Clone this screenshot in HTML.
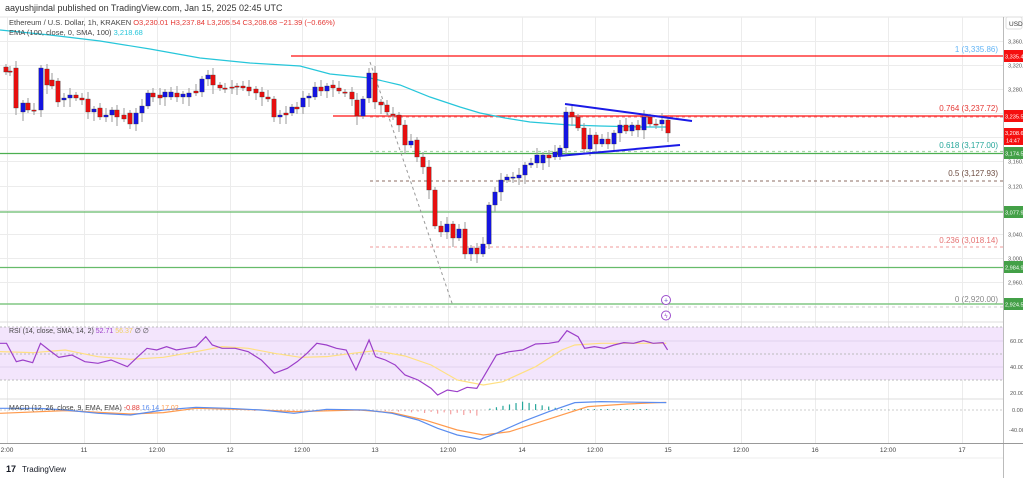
<!DOCTYPE html>
<html><head><meta charset="utf-8"><style>
html,body{margin:0;padding:0;background:#fff;width:1023px;height:478px;overflow:hidden;font-family:"Liberation Sans",sans-serif}
svg text{font-family:"Liberation Sans",sans-serif}
</style></head><body>
<svg id="s" width="1023" height="478" viewBox="0 0 1023 478" xmlns="http://www.w3.org/2000/svg">
<text x="5" y="11" font-size="9" fill="#333">aayushjindal published on TradingView.com, Jan 15, 2025 02:45 UTC</text>
<line x1="0" y1="17" x2="1023" y2="17" stroke="#e6e6e6"/>
<g id="grid" stroke="#ececec" stroke-width="1"></g>
<line x1="1003.5" y1="17" x2="1003.5" y2="478" stroke="#bbb"/>
<rect x="1006" y="17" width="16" height="12" fill="#fff" stroke="#ddd" rx="2"/>
<text x="1009" y="26" font-size="6.5" fill="#333">USD</text>
<g font-size="5.6" fill="#555" id="pax"></g>
<line x1="291" y1="56" x2="1003" y2="56" stroke="#ff1010" stroke-width="1.3"/>
<line x1="333" y1="116" x2="1003" y2="116" stroke="#ff1010" stroke-width="1.3"/>
<line x1="370" y1="117" x2="1003" y2="117" stroke="#f08080" stroke-dasharray="3,3"/>
<line x1="0" y1="153.5" x2="1003" y2="153.5" stroke="#4caf50" stroke-width="1.2"/>
<line x1="370" y1="151.5" x2="1003" y2="151.5" stroke="#a5d6a7" stroke-dasharray="3,3" stroke-width="1.3"/>
<line x1="370" y1="181" x2="1003" y2="181" stroke="#8d6e63" stroke-dasharray="3,3"/>
<line x1="0" y1="212" x2="1003" y2="212" stroke="#66bb6a" stroke-width="1.2"/>
<line x1="370" y1="247" x2="1003" y2="247" stroke="#ef9a9a" stroke-dasharray="3,3"/>
<line x1="0" y1="267.5" x2="1003" y2="267.5" stroke="#66bb6a" stroke-width="1.2"/>
<line x1="0" y1="304" x2="1003" y2="304" stroke="#81c784" stroke-width="1.6"/>
<line x1="370" y1="307" x2="1003" y2="307" stroke="#ccc" stroke-dasharray="3,3"/>
<g font-size="8">
<text x="998" y="52" text-anchor="end" fill="#64b5f6">1 (3,335.86)</text>
<text x="998" y="111" text-anchor="end" fill="#e53935">0.764 (3,237.72)</text>
<text x="998" y="148" text-anchor="end" fill="#26a69a">0.618 (3,177.00)</text>
<text x="998" y="176" text-anchor="end" fill="#6d4c41">0.5 (3,127.93)</text>
<text x="998" y="243" text-anchor="end" fill="#e57373">0.236 (3,018.14)</text>
<text x="998" y="302" text-anchor="end" fill="#888">0 (2,920.00)</text>
</g>
<polyline points="370,62 453,306" stroke="#999" stroke-dasharray="3,3" fill="none"/>
<polyline fill="none" stroke="#26c6da" stroke-width="1.2" points="0,30 50,35 100,41 150,49 200,58 250,63 300,66 330,74 370,78 400,85 430,97 460,107 480,113 505,118 530,122 570,125 600,126 640,127 670,127"/>
<g id="candles"></g>
<line x1="565" y1="104" x2="692" y2="121" stroke="#1a1ae6" stroke-width="2"/>
<line x1="558" y1="156" x2="680" y2="145" stroke="#1a1ae6" stroke-width="2"/>
<g font-size="5.6" fill="#fff">
<rect x="1004" y="50" width="19" height="12" fill="#f50f0f"/><text x="1005" y="58.5">3,335.42</text>
<rect x="1004" y="110" width="19" height="12" fill="#f50f0f"/><text x="1005" y="118.5">3,235.53</text>
<rect x="1004" y="128" width="19" height="17" fill="#f50f0f"/><text x="1005" y="135">3,208.68</text><text x="1006" y="142.5">14:47</text>
<rect x="1004" y="147" width="19" height="12" fill="#43a047"/><text x="1005" y="155.5">3,174.59</text>
<rect x="1004" y="206" width="19" height="12" fill="#43a047"/><text x="1005" y="214.5">3,077.97</text>
<rect x="1004" y="261" width="19" height="12" fill="#43a047"/><text x="1005" y="269.5">2,984.90</text>
<rect x="1004" y="298" width="19" height="12" fill="#43a047"/><text x="1005" y="306.5">2,924.53</text>
</g>
<g font-size="7.5">
<text x="9" y="25" fill="#444">Ethereum / U.S. Dollar, 1h, KRAKEN <tspan fill="#e53935">O3,230.01  H3,237.84  L3,205.54  C3,208.68  −21.39 (−0.66%)</tspan></text>
<text x="9" y="35" fill="#444">EMA (100, close, 0, SMA, 100) <tspan fill="#26c6da">3,218.68</tspan></text>
</g>
<circle cx="666" cy="300" r="4.5" fill="#fff" stroke="#9c4dcc"/><text x="666" y="302.5" font-size="7" fill="#6a5acd" text-anchor="middle">+</text>
<circle cx="666" cy="315.5" r="4.5" fill="#fff" stroke="#9c4dcc"/><text x="666" y="318" font-size="6" fill="#9c4dcc" text-anchor="middle">ϟ</text>
<line x1="0" y1="322" x2="1003" y2="322" stroke="#ddd"/>
<rect x="0" y="327" width="1003" height="53" fill="#f3e5fc"/>
<line x1="0" y1="327" x2="1003" y2="327" stroke="#bbb" stroke-dasharray="2,2"/>
<line x1="0" y1="354" x2="1003" y2="354" stroke="#bbb" stroke-dasharray="2,2"/>
<line x1="0" y1="380" x2="1003" y2="380" stroke="#bbb" stroke-dasharray="2,2"/>
<line x1="0" y1="341" x2="1003" y2="341" stroke="#e2d4ee"/>
<line x1="0" y1="367" x2="1003" y2="367" stroke="#e2d4ee"/>
<g font-size="5.6" fill="#555"><text x="1010" y="343">60.00</text><text x="1010" y="369">40.00</text><text x="1010" y="395">20.00</text><text x="1012" y="412">0.00</text><text x="1009" y="432">-40.00</text></g>
<line x1="0" y1="399" x2="1003" y2="399" stroke="#ddd"/>
<line x1="0" y1="410" x2="1003" y2="410" stroke="#ccc" stroke-dasharray="2,2"/>
<g transform="translate(0,300) scale(0.6532,0.3333)" fill="none" stroke-width="1.2">
<polyline vector-effect="non-scaling-stroke" stroke="#ffe082" points="0,155 50,158 100,150 150,170 200,178 250,172 300,155 340,140 380,145 420,160 460,172 500,170 540,160 575,152 620,168 660,195 700,240 740,255 770,245 820,200 860,150 880,135 920,130 1020,130"/>
<polyline vector-effect="non-scaling-stroke" stroke="#9c3fc9" points="0,130 10,130 25,185 35,180 50,188 62,130 75,150 90,172 110,165 130,185 150,190 170,180 195,200 210,172 225,145 240,150 255,140 270,150 285,145 300,140 315,110 325,135 340,145 360,145 380,155 400,180 420,220 440,205 455,185 470,160 485,130 500,135 515,145 530,150 545,210 565,120 575,170 590,180 605,195 620,225 640,240 660,265 670,285 685,270 700,275 715,262 730,265 745,215 760,165 780,155 800,150 820,132 840,130 855,125 868,92 885,110 895,145 910,140 925,145 940,135 955,128 970,130 985,122 1000,130 1015,128 1022,150"/>
<g id="hist"></g>
<polyline vector-effect="non-scaling-stroke" stroke="#ff9a4d" points="0,340 100,332 200,342 250,338 300,325 400,330 450,335 550,330 600,338 650,360 700,390 740,405 780,395 820,370 860,345 900,320 960,312 1020,307"/>
<polyline vector-effect="non-scaling-stroke" stroke="#5b8def" points="0,325 60,325 100,330 150,340 200,345 250,330 300,322 350,325 400,330 450,340 500,328 560,330 600,340 640,360 670,385 700,405 735,418 760,400 800,365 840,335 880,308 920,305 1020,308"/>
</g>
<g font-size="7">
<text x="9" y="333" fill="#444">RSI (14, close, SMA, 14, 2) <tspan fill="#9c3fc9">52.71</tspan> <tspan fill="#f0d060">56.37</tspan> ∅ ∅</text>
<text x="9" y="410" fill="#444">MACD (12, 26, close, 9, EMA, EMA) <tspan fill="#e53935">-0.88</tspan> <tspan fill="#5b8def">16.14</tspan> <tspan fill="#ff9a4d">17.02</tspan></text>
</g>
<line x1="0" y1="443.5" x2="1023" y2="443.5" stroke="#999"/>
<line x1="0" y1="458" x2="1003" y2="458" stroke="#eee"/>
<g font-size="6.5" fill="#444" text-anchor="middle" id="tax"></g>
<text x="6" y="472" font-size="9" font-weight="bold" fill="#131722">17</text>
<text x="22" y="472" font-size="8" fill="#131722">TradingView</text>
</svg>
<script>
var NS="http://www.w3.org/2000/svg";
function el(p,t,a){var e=document.createElementNS(NS,t);for(var k in a)e.setAttribute(k,a[k]);p.appendChild(e);return e;}
var g=document.getElementById('grid');
[41,65,89,113,137,161,186,210,234,258,282].forEach(function(y){el(g,'line',{x1:0,y1:y+.5,x2:1003,y2:y+.5});});
var xs=[7,84,157,230,302,375,448,522,595,668,741,815,888,962];
xs.forEach(function(x){el(g,'line',{x1:x+.5,y1:17,x2:x+.5,y2:443});});
var tl=["2:00","11","12:00","12","12:00","13","12:00","14","12:00","15","12:00","16","12:00","17"];
var ta=document.getElementById('tax');
xs.forEach(function(x,i){var t=el(ta,'text',{x:x,y:452});t.textContent=tl[i];});
var pa=document.getElementById('pax');
[[41,"3,360.00"],[65,"3,320.00"],[89,"3,280.00"],[161,"3,160.00"],[186,"3,120.00"],[234,"3,040.00"],[258,"3,000.00"],[282,"2,960.00"]].forEach(function(p){var t=el(pa,'text',{x:1008,y:p[0]+2.5});t.textContent=p[1];});
var C=[[6,67,72],[10,71,71],[16,68,108],[23,112,103],[28,103,110],[34,110,110],[41,110,68],[47,69,85],[52,80,86],[58,81,102],[64,100,98],[70,98,95],[76,95,98],[82,98,100],[88,99,112],[94,112,109],[100,108,117],[106,117,115],[112,115,110],[117,110,117],[124,115,119],[130,113,124],[136,124,113],[142,113,106],[148,106,93],[153,93,97],[160,95,98],[165,97,92],[171,97,92],[177,93,97],[183,97,94],[189,97,93],[196,91,93],[202,92,79],[208,79,75],[213,75,85],[220,85,88],[225,88,88],[232,87,87],[237,86,86],[243,86,88],[249,87,91],[256,89,93],[262,92,97],[268,97,99],[274,99,117],[280,117,115],[286,113,115],[292,113,107],[297,107,109],[303,107,98],[309,98,96],[315,97,87],[321,87,91],[327,91,86],[333,85,88],[339,88,91],[345,92,92],[352,92,99],[357,100,116],[363,116,99],[369,98,73],[375,73,102],[381,102,105],[387,105,112],[393,114,115],[399,115,125],[405,125,145],[411,145,141],[417,140,157],[423,157,167],[429,167,190],[435,190,226],[441,226,232],[447,232,224],[453,224,238],[459,238,229],[465,229,254],[471,254,248],[477,248,254],[483,254,244],[489,244,205],[495,205,192],[501,192,180],[507,180,177],[513,178,177],[519,178,175],[525,175,165],[531,165,163],[537,163,155],[543,163,155],[549,155,158],[555,157,152],[560,155,148],[566,148,112],[572,112,117],[578,117,128],[584,128,149],[590,149,135],[596,135,144],[602,144,139],[608,139,144],[614,144,133],[620,133,125],[626,125,131],[632,131,125],[638,125,130],[644,130,117],[650,117,124],[656,124,124],[662,124,120],[668,120,133]];
var cg=document.getElementById('candles');
C.forEach(function(c,i){var x=c[0],o=c[1],cl=c[2];var up=cl<o;var col=up?'#1414e0':'#e60f0f';
var t=Math.min(o,cl),b=Math.max(o,cl);var h=Math.max(b-t,1.2);
var wt=t-3-(i%3)*2,wb=b+3+(i%4)*2;
el(cg,'line',{x1:x,y1:wt,x2:x,y2:wb,stroke:'#9a9a9a','stroke-width':1});
el(cg,'rect',{x:x-2.2,y:t,width:4.4,height:h,fill:col,stroke:'#333','stroke-width':0.3});});
var hg=document.getElementById('hist');
for(var x=380;x<=990;x+=10){var v;
 if(x<740){v=(x>560?(x-560)/180*18:3)*(x%20?1:0.6);el(hg,'line',{x1:x,y1:330,x2:x,y2:330+Math.min(v,22),stroke:'#f4a0a0','vector-effect':'non-scaling-stroke'});}
 else if(x<860){v=(x<800?(x-740)/60*25:25-(x-800)/60*22);el(hg,'line',{x1:x,y1:330,x2:x,y2:330-v,stroke:'#26a69a','vector-effect':'non-scaling-stroke'});}
 else {el(hg,'line',{x1:x,y1:330,x2:x,y2:327,stroke:'#26a69a','vector-effect':'non-scaling-stroke'});}
}
</script>
</body></html>
